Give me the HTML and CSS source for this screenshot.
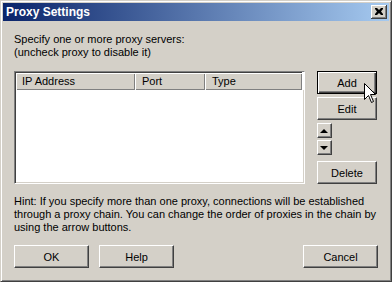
FILE: index.html
```html
<!DOCTYPE html>
<html lang="en">
<head>
  <meta charset="UTF-8" />
  <title>Proxy Settings</title>
  <link rel="stylesheet" href="styles.css">
</head>
<body>

  <div class="window">
    <div class="titlebar">
      <span class="title">Proxy Settings</span>
      <button class="close">
        <svg width="8" height="7" viewBox="0 0 8 7">
          <path d="M0 0h2l2 2 2-2h2v1L6 3.5 8 6v1H6L4 5 2 7H0V6l2-2.5L0 1z" fill="#000"/>
        </svg>
      </button>
    </div>

    <div class="content">
      <p class="intro">Specify one or more proxy servers:<br>(uncheck proxy to disable it)</p>

      <div class="main">
        <div class="list">
          <div class="list-head">
            <div class="col col-ip">IP Address</div>
            <div class="col col-port">Port</div>
            <div class="col col-type">Type</div>
          </div>
          <div class="list-rows"></div>
        </div>

        <div class="side">
          <button class="btn default">Add</button>
          <button class="btn">Edit</button>
          <div class="arrows">
            <button class="arrow"><span class="tri up"></span></button>
            <button class="arrow"><span class="tri down"></span></button>
          </div>
          <button class="btn">Delete</button>
        </div>
      </div>

      <p class="hint">Hint: If you specify more than one proxy, connections will be established<br>through a proxy chain. You can change the order of proxies in the chain by<br>using the arrow buttons.</p>

      <div class="footer">
        <button class="btn wide">OK</button>
        <button class="btn wide">Help</button>
        <div class="spacer"></div>
        <button class="btn wide">Cancel</button>
      </div>
    </div>

    <!-- mouse pointer resting on Add -->
    <svg class="cursor" width="12" height="20" viewBox="0 0 12 20">
      <path d="M0.5 0.5V16.5L4.5 12.5L7.5 19.5L9.5 18.5L6.5 11.5H11.5Z" fill="#fff" stroke="#000" stroke-width="1"/>
    </svg>
  </div>

</body>
</html>
```

FILE: styles.css
```css
body {
  margin: 0;
  padding: 0;
  font-family: 'Liberation Sans', Arial, sans-serif;
  font-size: 11px;
  color: #000;
  background: #d4d0c8;
}
.window {
  position: relative;
  width: 392px;
  height: 282px;
  box-sizing: border-box;
  padding: 2px;
  background: #d4d0c8;
  border: 1px solid;
  border-color: #d4d0c8 #404040 #404040 #d4d0c8;
  box-shadow: inset 1px 1px #fff, inset -1px -1px #808080;
  display: flex;
  flex-direction: column;
}
.titlebar {
  height: 18px;
  display: flex;
  align-items: center;
  padding: 0 2px 0 3px;
  background: linear-gradient(to right, #0a246a, #a6caf0);
}
.title {
  flex: 1;
  color: #fff;
  font-weight: bold;
  font-size: 12px;
}
.close {
  width: 16px;
  height: 14px;
  padding: 0;
  border: none;
  background: #d4d0c8;
  box-shadow: inset -1px -1px #404040, inset 1px 1px #fff, inset -2px -2px #808080;
  display: flex;
  align-items: center;
  justify-content: center;
}
.close svg {
  display: block;
  margin: 0 1px 1px 0;
}
.content {
  flex: 1;
  padding: 0 11px;
  display: flex;
  flex-direction: column;
}
p {
  margin: 0;
  line-height: 13px;
}
.intro {
  margin-top: 12px;
}
.main {
  margin-top: 12px;
  display: flex;
  gap: 12px;
}
.list {
  width: 291px;
  height: 113px;
  box-sizing: border-box;
  border: 1px solid;
  border-color: #808080 #fff #fff #808080;
  background: #fff;
  display: flex;
  flex-direction: column;
}
.list-head {
  display: flex;
  height: 17px;
  border-top: 1px solid #404040;
  border-left: 1px solid #404040;
  background: #d4d0c8;
  margin-right: 2px;
}
.col {
  height: 17px;
  line-height: 17px;
  box-sizing: border-box;
  padding-left: 6px;
  box-shadow: inset 1px 1px #fff, inset -1px -1px #808080;
}
.col-ip { width: 119px; }
.col-port { width: 70px; padding-left: 7px; }
.col-type { flex: 1; padding-left: 7px; }
.list-rows {
  flex: 1;
  border-left: 1px solid #404040;
  box-shadow: inset 0 -1px #d4d0c8, inset -1px 0 #d4d0c8;
}
.side {
  width: 60px;
  display: flex;
  flex-direction: column;
}
.btn {
  height: 23px;
  padding: 0;
  font-family: inherit;
  font-size: 11px;
  color: #000;
  background: #d4d0c8;
  border: 1px solid;
  border-color: #fff #404040 #404040 #fff;
  box-shadow: inset -1px -1px #808080;
}
.side .btn + .btn {
  margin-top: 3px;
}
.btn.default {
  border-color: #000;
  box-shadow: inset 1px 1px #fff, inset -1px -1px #404040, inset -2px -2px #808080;
}
.arrows {
  margin: 3px 0 6px;
  display: flex;
  flex-direction: column;
  gap: 2px;
}
.arrow {
  width: 15px;
  height: 15px;
  padding: 0;
  background: #d4d0c8;
  border: 1px solid;
  border-color: #fff #404040 #404040 #fff;
  box-shadow: inset -1px -1px #808080;
  display: flex;
  align-items: center;
  justify-content: center;
}
.tri {
  width: 0;
  height: 0;
  border-left: 4px solid transparent;
  border-right: 4px solid transparent;
  margin-right: 1px;
}
.tri.up { border-bottom: 4px solid #000; }
.tri.down { border-top: 4px solid #000; }
.hint {
  margin-top: 11px;
}
.footer {
  margin-top: 11px;
  display: flex;
  gap: 10px;
}
.btn.wide {
  width: 75px;
}
.spacer {
  flex: 1;
}
.cursor {
  position: absolute;
  left: 363px;
  top: 82px;
}
```
